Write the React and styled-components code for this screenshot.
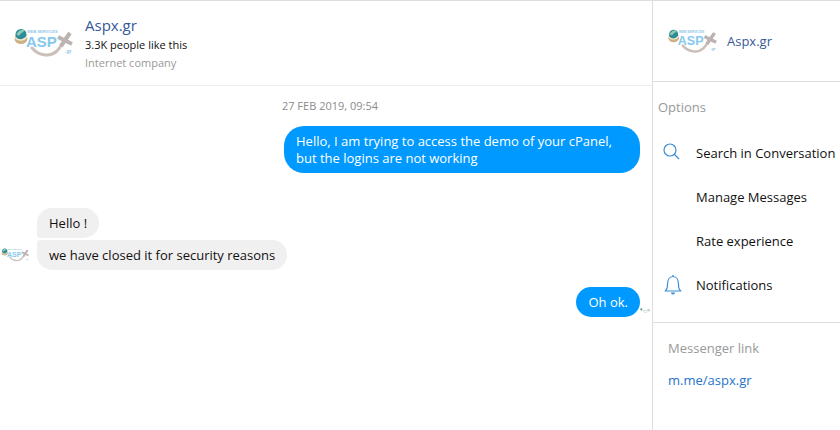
import styled, { createGlobalStyle } from "styled-components";

const options = [
  { label: "Search in Conversation", icon: "search" },
  { label: "Manage Messages" },
  { label: "Rate experience" },
  { label: "Notifications", icon: "bell" },
];

const Logo = ({ width }) => (
  <LogoSvg $width={width} viewBox="0 0 60 30" role="img" aria-label="Aspx.gr">
    <ellipse cx="8" cy="10.5" rx="6.5" ry="5.5" fill="#cdb182" />
    <circle cx="8" cy="6.500" r="5.500" fill="#2d8c98" />
    <path d="M3.500 6c2-4 6-5 8-4-1 3-3 2-4 4s-3 2-4 0z" fill="#8ccbb2" />
    <path d="M2 9.500c4 4 9 3 12-1" fill="none" stroke="#f4ead2" strokeWidth="1.5" />
    <path
      d="M19 20c6 7 17 10 25 3 5-5 6-11 12-17"
      fill="none"
      stroke="#cbbfba"
      strokeWidth="3"
      strokeLinecap="round"
    />
    <path d="M45 9l14 7M57 5l-9 13" fill="none" stroke="#bcb4b2" strokeWidth="4" />
    <LogoText x="14" y="5" $size={4} fill="#91c9e8">WEB SERVICES</LogoText>
    <LogoText x="13" y="19" $size={15} fill="#86c8ee">ASP</LogoText>
    <LogoText x="52" y="25" $size={5} fill="#91c9e8">.gr</LogoText>
  </LogoSvg>
);

const SearchIcon = () => (
  <Icon viewBox="0 0 20 20" aria-hidden="true">
    <circle cx="7" cy="7" r="6" />
    <path d="M11.500 11.500L16 16" />
  </Icon>
);

const BellIcon = () => (
  <Icon viewBox="0 0 20 20" aria-hidden="true">
    <path d="M10 0v1.500M2.200 16c2-1.500 2.300-3 2.300-6.500C4.500 5 6.500 1.500 10 1.500s5.500 3.500 5.500 8c0 3.500.3 5 2.300 6.500z" />
    <path d="M8.500 18h3l-1.500 1z" fill="#3b8dd2" />
  </Icon>
);

const App = () => {
  return (
    <>
      <GlobalStyle />
      <Page>
        <Main>
          <Header>
            <Logo width={60} />
            <div>
              <PageName href="#page">Aspx.gr</PageName>
              <Detail>3.3K people like this</Detail>
              <Detail $muted>Internet company</Detail>
            </div>
          </Header>
          <Messages>
            <Time>27 FEB 2019, 09:54</Time>
            <Row>
              <Bubble $sent>
                Hello, I am trying to access the demo of your cPanel, but the
                logins are not working
              </Bubble>
              <Receipt />
            </Row>
            <Received>
              <Sender>
                <Logo width={28} />
              </Sender>
              <Group>
                <Bubble $first>Hello !</Bubble>
                <Bubble $last>we have closed it for security reasons</Bubble>
              </Group>
            </Received>
            <Row>
              <Bubble $sent>Oh ok.</Bubble>
              <Receipt>
                <Logo width={10} />
              </Receipt>
            </Row>
          </Messages>
        </Main>
        <Sidebar>
          <Profile>
            <Logo width={50} />
            <ProfileName href="#page">Aspx.gr</ProfileName>
          </Profile>
          <Options>
            <OptionsTitle>Options</OptionsTitle>
            {options.map((option) => (
              <Option key={option.label} type="button">
                <IconSlot>
                  {option.icon === "search" && <SearchIcon />}
                  {option.icon === "bell" && <BellIcon />}
                </IconSlot>
                {option.label}
              </Option>
            ))}
          </Options>
          <LinkSection>
            <LinkTitle>Messenger link</LinkTitle>
            <MessengerLink href="#messenger">m.me/aspx.gr</MessengerLink>
          </LinkSection>
        </Sidebar>
      </Page>
    </>
  );
};

const GlobalStyle = createGlobalStyle`
  * {
    box-sizing: border-box;
  }

  body {
    margin: 0;
    background-color: #fff;
    color: #111;
    font-family: "Open Sans", "Noto Sans", sans-serif;
    font-size: 13px;
  }
`;

const Page = styled.div`
  display: flex;
  min-height: 100vh;
  border-top: 1px solid #dedede;
`;

const Main = styled.main`
  flex: 1;
  min-width: 0;
`;

const Header = styled.header`
  display: flex;
  align-items: center;
  gap: 12px;
  height: 85px;
  padding-left: 13px;
  border-bottom: 1px solid #f0f0f0;
`;

const LogoSvg = styled.svg`
  display: block;
  flex: none;
  width: ${(props) => props.$width}px;
`;

const LogoText = styled.text`
  font-family: "Liberation Sans", sans-serif;
  font-size: ${(props) => props.$size}px;
  font-weight: 700;
`;

const PageName = styled.a`
  display: block;
  color: #385898;
  font-size: 15px;
  line-height: 22px;
  text-decoration: none;
`;

const Detail = styled.div`
  color: ${(props) => (props.$muted ? "#999" : "#111")};
  font-size: 11px;
  line-height: 18px;
`;

const Messages = styled.section`
  padding: 11px 0;
`;

const Time = styled.div`
  color: #8c8c8c;
  font-size: 11px;
  line-height: 18px;
  text-align: center;
  padding-left: 8px;
  margin-bottom: 11px;
`;

const Row = styled.div`
  display: flex;
  justify-content: flex-end;
`;

const Bubble = styled.div`
  max-width: 356px;
  padding: 7px 12px 6px;
  border-radius: 20px;
  line-height: 17px;
  color: ${(props) => (props.$sent ? "#fff" : "#111")};
  background-color: ${(props) => (props.$sent ? "#0099ff" : "#f1f0f0")};
  ${(props) => props.$first && "border-bottom-left-radius: 4px;"}
  ${(props) => props.$last && "border-top-left-radius: 4px;"}
`;

const Receipt = styled.div`
  display: flex;
  align-items: flex-end;
  flex: none;
  width: 12px;
  padding-bottom: 4px;
`;

const Received = styled.div`
  display: flex;
  align-items: flex-end;
  gap: 8px;
  padding: 35px 0 17px 1px;
`;

const Sender = styled.div`
  padding-bottom: 8px;
`;

const Group = styled.div`
  display: flex;
  flex-direction: column;
  align-items: flex-start;
  gap: 2px;
`;

const Sidebar = styled.aside`
  flex: none;
  width: 188px;
  border-left: 1px solid #dedede;
`;

const Profile = styled.div`
  display: flex;
  align-items: center;
  gap: 10px;
  height: 81px;
  padding-left: 14px;
  border-bottom: 1px solid #dedede;
`;

const ProfileName = styled.a`
  color: #385898;
  text-decoration: none;
`;

const Options = styled.section`
  padding: 13px 0 15px;
  border-bottom: 1px solid #dedede;
`;

const OptionsTitle = styled.h2`
  margin: 0 0 12px 5px;
  color: #999;
  font-size: 13px;
  font-weight: 400;
  line-height: 24px;
`;

const Option = styled.button`
  display: flex;
  align-items: center;
  width: 100%;
  height: 44px;
  padding: 0 0 0 10px;
  border: 0;
  background: none;
  color: #111;
  font: inherit;
  white-space: nowrap;
  cursor: pointer;
`;

const IconSlot = styled.span`
  width: 33px;
`;

const Icon = styled.svg`
  display: block;
  width: 20px;
  height: 20px;
  fill: none;
  stroke: #3b8dd2;
  stroke-width: 1.2;
  stroke-linejoin: round;
`;

const LinkSection = styled.section`
  padding: 13px 15px;
`;

const LinkTitle = styled.h2`
  margin: 0 0 8px;
  color: #999;
  font-size: 13px;
  font-weight: 400;
  line-height: 24px;
`;

const MessengerLink = styled.a`
  color: #2573c9;
  line-height: 24px;
  text-decoration: none;
`;

export default App;
